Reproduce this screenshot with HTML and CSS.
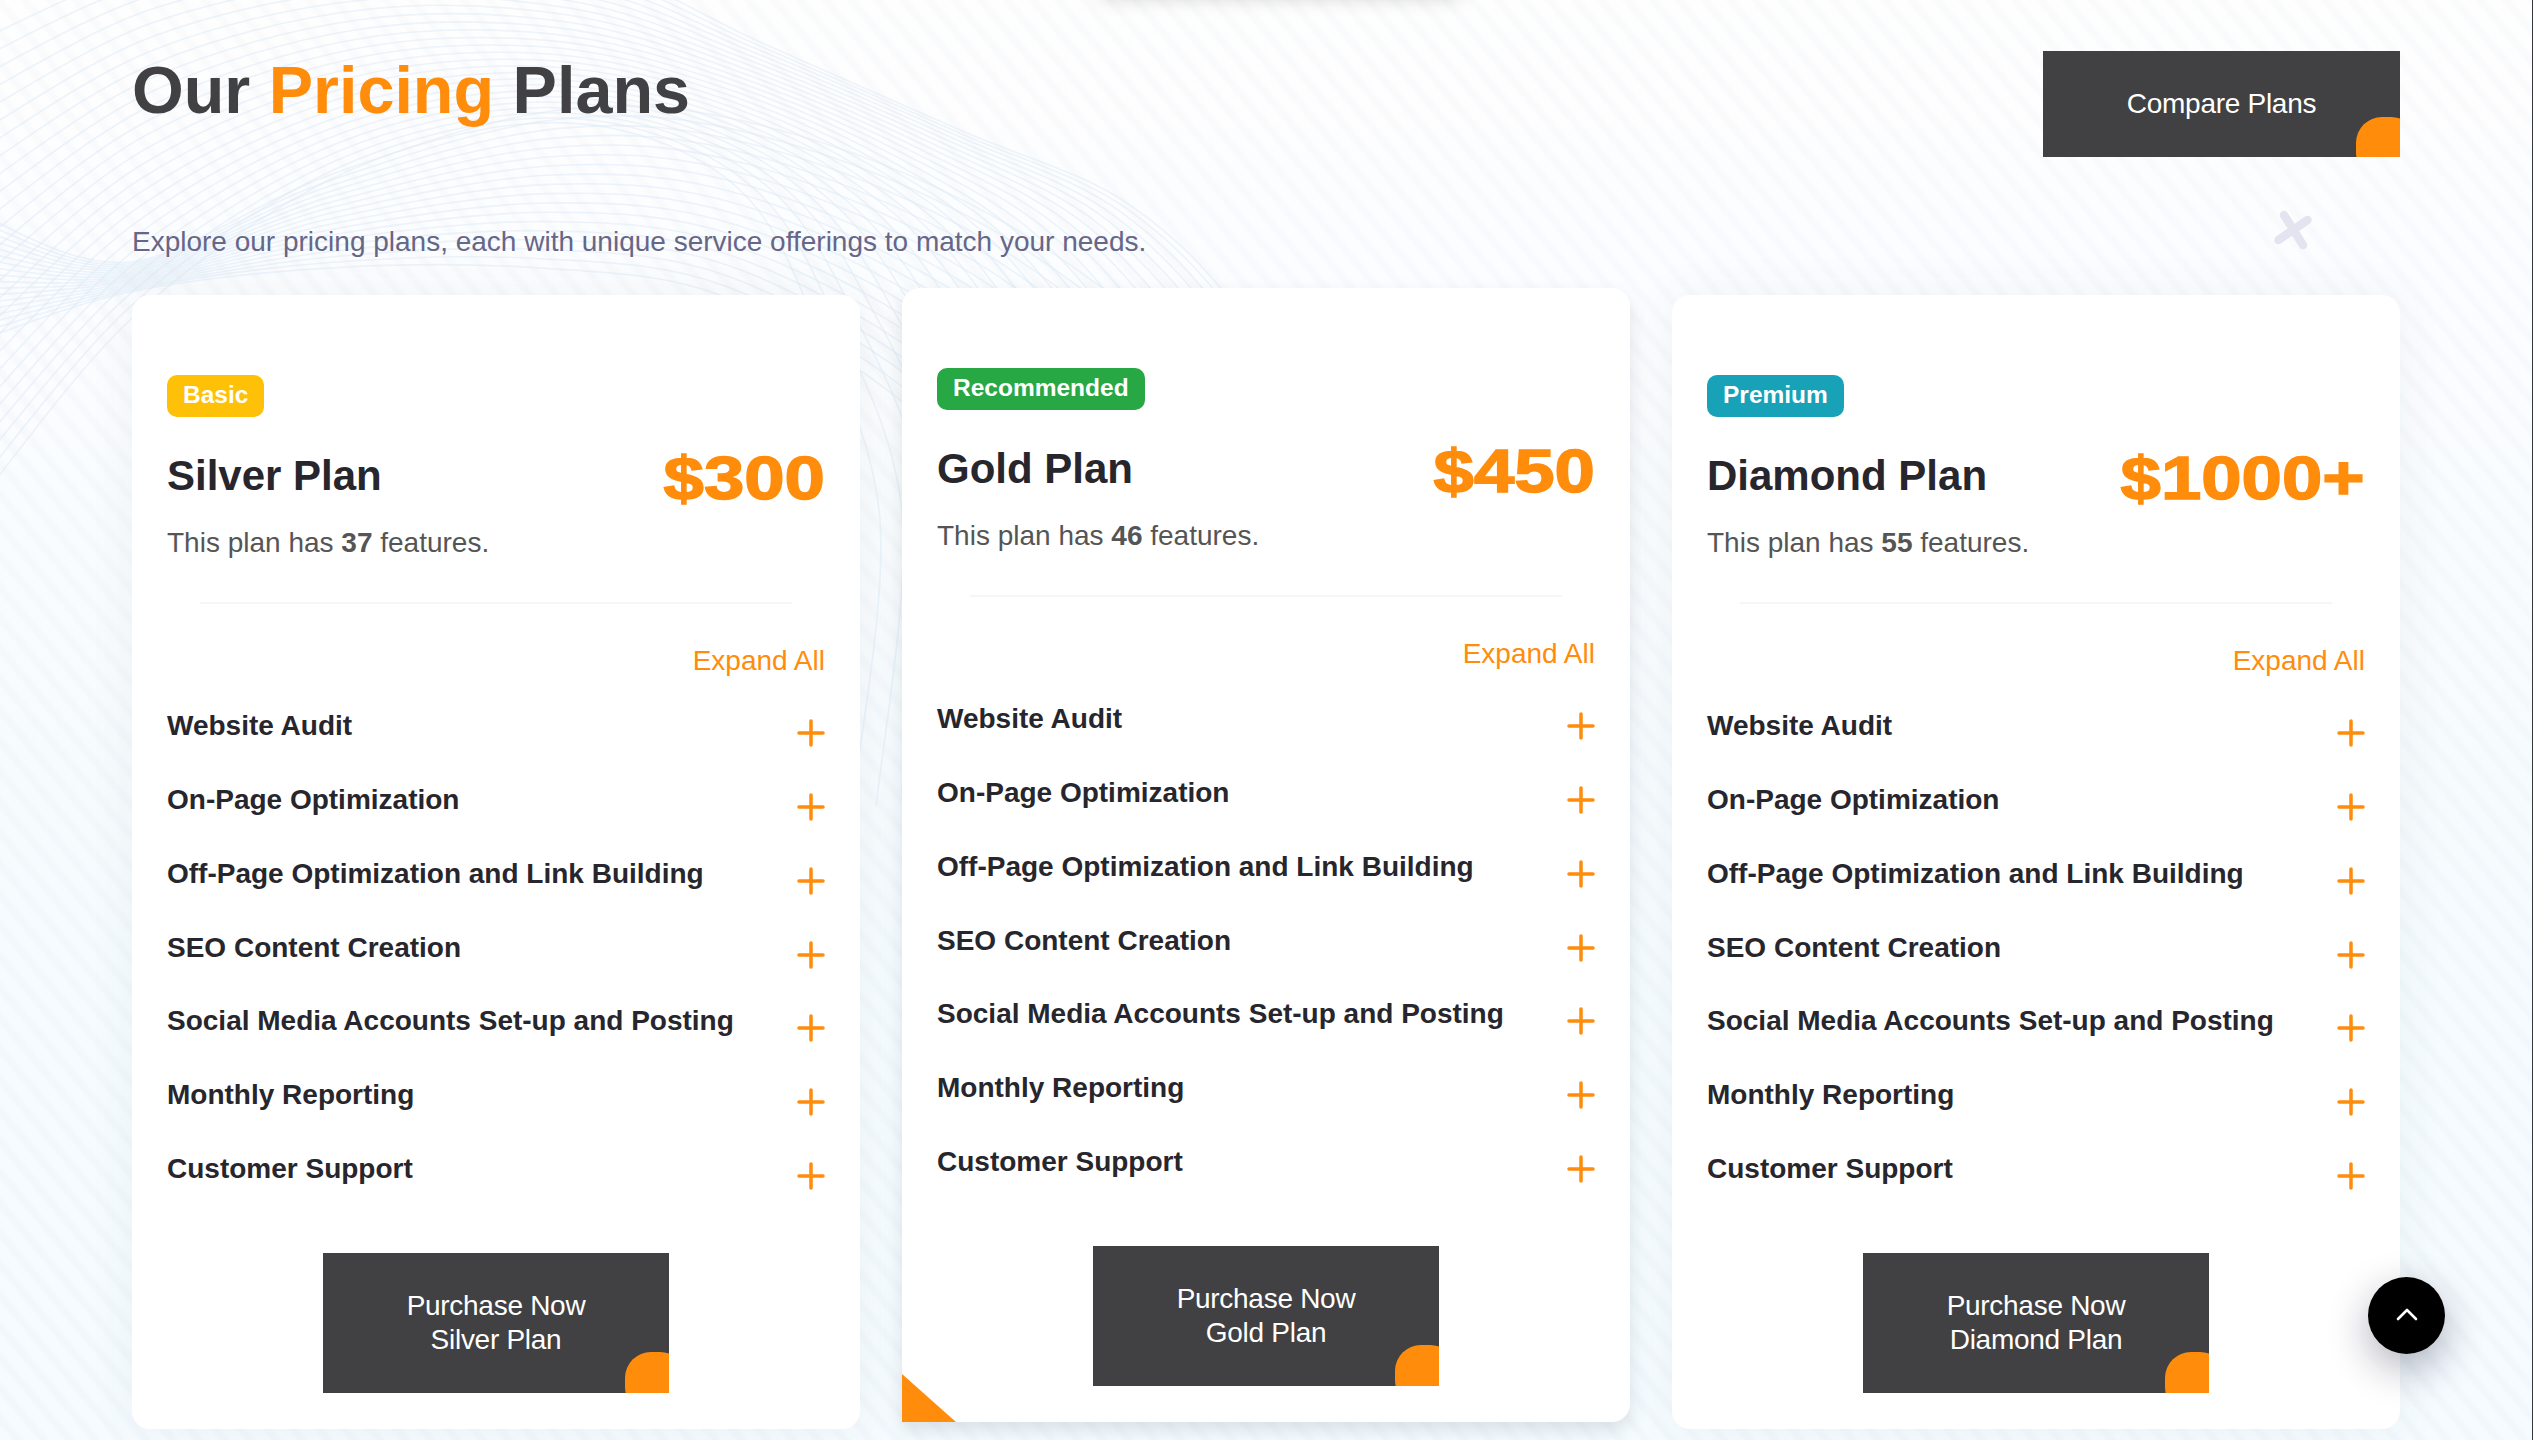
FILE: index.html
```html
<!DOCTYPE html>
<html lang="en">
<head>
<meta charset="utf-8">
<title>Pricing Plans</title>
<link rel="stylesheet" href="styles.css">
</head>
<body>
<main class="page">
  <div class="top-shade"></div>
  <svg class="waves" id="waves" viewBox="0 0 1300 820" aria-hidden="true"></svg>
  <svg class="cross" viewBox="0 0 38 40" aria-hidden="true"><path d="M10 5 29 35M4.500 30 33.500 10"/></svg>
  <header class="head">
    <h1 class="title">Our <span>Pricing</span> Plans</h1>
    <a class="btn btn-compare">Compare Plans</a>
  </header>
  <p class="lead">Explore our pricing plans, each with unique service offerings to match your needs.</p>
  <section class="plans" id="plans"></section>
  <a class="to-top"><svg viewBox="0 0 24 14" aria-hidden="true"><path d="M3 12 12 3 21 12"/></svg></a>
</main>
<script src="script.js"></script>
</body>
</html>
```
FILE: styles.css
```css
* { box-sizing: border-box; }
body { margin: 0; font-family: "Liberation Sans", Arial, sans-serif; font-size: 28px; }
.page {
  position: relative; width: 2533px; height: 1440px; overflow: hidden; padding: 51px 132px 0 132px;
  border-right: 1px solid #33373b;
  background:
    repeating-linear-gradient(50deg, rgba(80,110,130,0) 0 8px, rgba(80,110,130,.022) 12px 15px, rgba(80,110,130,0) 19.800px),
    linear-gradient(#fefefe 0, #fcfdff 250px, #f6fbfe 800px, #f5fbff 100%);
}
.top-shade { position: absolute; left: 1100px; top: -22px; width: 360px; height: 14px; box-shadow: 0 4px 20px rgba(0,0,0,.22); }
.waves { position: absolute; left: 0; top: 0; width: 1300px; height: 820px; fill: none; stroke: #dceaf6; stroke-opacity: .52; stroke-width: 1.6; }
.cross { position: absolute; left: 2274px; top: 210px; width: 38px; height: 40px; fill: none; stroke: #e4e4f0; stroke-width: 8.500; stroke-linecap: round; }
.head { position: relative; display: flex; justify-content: space-between; align-items: flex-start; height: 174px; }
.title { margin: 0; font-size: 66.5px; line-height: 78px; color: #414143; }
.title span { color: #ff8c0b; }
.btn {
  position: relative; display: flex; align-items: center; justify-content: center; overflow: hidden;
  background: #414143; color: #fff; text-align: center; line-height: 34px; letter-spacing: -.28px;
}
.btn::after { content: ""; position: absolute; right: -17px; bottom: -21px; width: 61px; height: 61px; border-radius: 26px; background: #ff8c0b; }
.btn-compare { width: 357px; height: 106px; }
.lead { position: relative; margin: 0; height: 70px; line-height: 34px; color: #666687; }
.plans { position: relative; display: grid; grid-template-columns: repeat(3, 728px); gap: 42px; }
.card { position: relative; height: 1134px; padding: 80px 35px 0; background: #fff; border-radius: 18px; box-shadow: 0 0 50px rgba(60,80,90,.06); }
.card-featured { top: -7px; border-bottom-left-radius: 0; box-shadow: 0 8px 18px rgba(60,80,90,.15); }
.card-featured::before { content: ""; position: absolute; left: 0; bottom: 0; width: 54px; height: 48px; background: #ff8c0b; clip-path: polygon(0 0, 100% 100%, 0 100%); }
.badge { display: block; width: max-content; height: 42px; padding: 0 16px; border-radius: 10px; color: #fff; font-size: 24.5px; font-weight: 700; line-height: 40px; }
.badge-basic { background: #ffc107; }
.badge-recommended { background: #28a745; }
.badge-premium { background: #17a2b8; }
.card-head { display: flex; justify-content: space-between; height: 108px; padding-top: 34px; }
.name { margin: 0; color: #27262d; font-size: 42px; line-height: 50px; }
.price { font-weight: 700; color: #ff8c0b; font-size: 62px; line-height: 54px; -webkit-text-stroke: 1.5px #ff8c0b; transform: scaleX(1.170); transform-origin: right; }
.count { margin: 0; color: #555; line-height: 34px; padding-top: 1px; }
.rule { margin: 42px 33px 0; height: 2px; background: #f6f6f6; }
.expand { display: block; margin-top: 40px; text-align: right; color: #ff8c0b; line-height: 34px; }
.features { list-style: none; margin: 31px 0 0; padding: 0; }
.features li { display: flex; justify-content: space-between; height: 73.85px; color: #27262d; font-weight: 700; line-height: 34px; }
.features svg { width: 28px; height: 28px; margin-top: 10px; fill: none; stroke: #ff8c0b; stroke-width: 3.500; stroke-linecap: round; }
.btn-buy { width: 346px; height: 140px; margin: 27px auto 0; }
.btn-buy::after { bottom: -20px; }
.to-top { position: absolute; left: 2368px; top: 1277px; width: 77px; height: 77px; border-radius: 50%; background: #000; display: flex; align-items: center; justify-content: center; box-shadow: 0 14px 40px rgba(20,15,50,.32); }
.to-top svg { width: 24px; height: 14px; fill: none; stroke: #fff; stroke-width: 2.600; stroke-linecap: round; stroke-linejoin: round; margin-top: -4px; }
```
FILE: script.js
```js
const plans = [
  { name: "Silver Plan", badge: "Basic", price: "$300", count: 37 },
  { name: "Gold Plan", badge: "Recommended", price: "$450", count: 46, featured: true },
  { name: "Diamond Plan", badge: "Premium", price: "$1000+", count: 55 }
];
const features = ["Website Audit", "On-Page Optimization", "Off-Page Optimization and Link Building", "SEO Content Creation", "Social Media Accounts Set-up and Posting", "Monthly Reporting", "Customer Support"];
const plus = '<svg viewBox="0 0 28 28"><path d="M14 2V26M2 14H26"/></svg>';
document.getElementById("plans").innerHTML = plans.map(p => `
  <article class="card${p.featured ? " card-featured" : ""}">
    <span class="badge badge-${p.badge.toLowerCase()}">${p.badge}</span>
    <div class="card-head"><h2 class="name">${p.name}</h2><span class="price">${p.price}</span></div>
    <p class="count">This plan has <b>${p.count}</b> features.</p>
    <div class="rule"></div>
    <a class="expand">Expand All</a>
    <ul class="features">${features.map(f => `<li>${f}${plus}</li>`).join("")}</ul>
    <a class="btn btn-buy">Purchase Now<br>${p.name}</a>
  </article>`).join("");

// Decorative line families, each blended between two guide curves.
function smooth(pts) {
  let d = `M${pts[0][0]} ${pts[0][1]}`;
  for (let i = 0; i < pts.length - 1; i++) {
    const a = pts[i - 1] || pts[i], b = pts[i], c = pts[i + 1], e = pts[i + 2] || c;
    d += `C${b[0] + (c[0] - a[0]) / 6} ${b[1] + (c[1] - a[1]) / 6} ${c[0] - (e[0] - b[0]) / 6} ${c[1] - (e[1] - b[1]) / 6} ${c[0]} ${c[1]}`;
  }
  return d;
}
function family(from, to, count, bend) {
  let out = "";
  for (let i = 0; i < count; i++) {
    const t = i / (count - 1);
    out += `<path d="${smooth(from.map((p, k) => {
      const u = k < bend ? t : Math.pow(t, 1.5);
      return [p[0] + (to[k][0] - p[0]) * u, p[1] + (to[k][1] - p[1]) * t];
    }))}"/>`;
  }
  return out;
}
document.getElementById("waves").innerHTML =
  family(
    [[-20, 40], [160, -35], [380, -60], [600, -30], [760, 42], [960, 130], [1130, 205], [1250, 330], [1290, 480]],
    [[-20, 500], [130, 320], [310, 190], [480, 130], [620, 130], [740, 190], [810, 310], [880, 520], [850, 820]], 26, 4) +
  family(
    [[-20, 340], [130, 292], [330, 268], [540, 268], [720, 295], [900, 400], [1000, 520]],
    [[-20, 215], [130, 262], [330, 175], [560, 110], [760, 125], [1000, 220], [1250, 400]], 18, 9);
```
